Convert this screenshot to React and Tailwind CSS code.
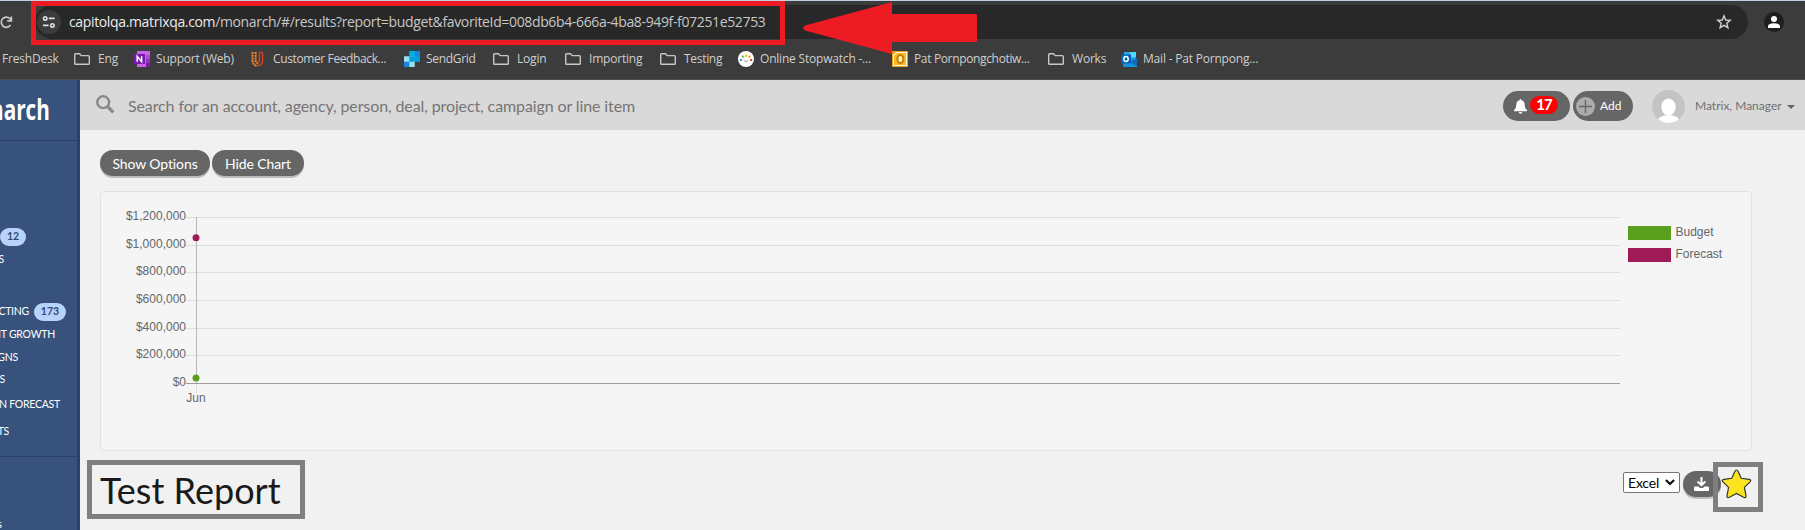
import React from 'react';

const Folder = () => (
  <svg width="16" height="12" viewBox="0 0 16 12" fill="none" stroke="#c7c7c7" strokeWidth="1.4" strokeLinejoin="round">
    <path d="M.7 1.6Q.7.7 1.6.7H5.6L7.2 2.6H14.4Q15.3 2.6 15.3 3.5V10.4Q15.3 11.3 14.4 11.3H1.6Q.7 11.3.7 10.4Z" />
  </svg>
);

const OneNote = () => (
  <svg width="16" height="16" viewBox="0 0 16 16">
    <path d="M3 0H16V16H3Z" fill="#c764e8" />
    <path d="M12 4H16V8H12Z" fill="#ae4bd5" />
    <path d="M12 8H16V12H12Z" fill="#9332bf" />
    <path d="M12 12H16V16H12Z" fill="#7719aa" />
    <path d="M0 3H11V13H0Z" fill="#7719aa" />
    <path d="M3.2 10.7V5.3L7.6 10.7V5.3" fill="none" stroke="#fff" strokeWidth="1.5" />
  </svg>
);

const Ujet = () => (
  <svg width="16" height="16" viewBox="0 0 16 16" fill="none">
    <path d="M1.5 1V9Q1.5 14.2 6 14.8M4.6 1V9Q4.6 12 7 12.2" stroke="#f0862a" strokeWidth="2" strokeDasharray="2 .7" />
    <path d="M6 14.8Q11.6 14.6 11.6 9V3Q11.6 1 9.6 1.2Q8.4 1.4 8.4 3V9Q8.4 11.4 7 12.2" stroke="#d3451f" strokeWidth="1.5" />
  </svg>
);

const SendGrid = () => (
  <svg width="16" height="16" viewBox="0 0 16 16">
    <path d="M5.3 0H16V10.7H5.3Z" fill="#00b2e3" />
    <path d="M0 5.3H10.7V16H0Z" fill="#99e1f4" />
    <path d="M0 10.7H5.3V16H0Z" fill="#1a82e2" />
    <path d="M10.7 5.3H16V10.7H10.7Z" fill="#009dd9" />
    <path d="M5.3 5.3H10.7V10.7H5.3Z" fill="#009dd9" />
    <path d="M10.7 0H16V5.3H10.7Z" fill="#1a82e2" />
  </svg>
);

const Stopwatch = () => (
  <svg width="16" height="16" viewBox="0 0 16 16">
    <circle cx="8" cy="8" r="8" fill="#fff" />
    <rect x="7" y="3.5" width="2" height="2.4" fill="#f5c400" />
    <rect x="3.8" y="4.6" width="2" height="2" fill="#5bb531" />
    <rect x="10.4" y="4.6" width="2" height="2" fill="#f08a1d" />
    <rect x="2" y="8" width="2" height="2" fill="#28a0dc" />
    <rect x="12.2" y="8" width="2" height="2" fill="#e3342b" />
    <path d="M5.6 9L8 11L10.4 9" fill="none" stroke="#999" />
  </svg>
);

const OldOutlook = () => (
  <svg width="16" height="16" viewBox="0 0 16 16">
    <rect width="16" height="16" fill="#e9a01c" />
    <path d="M1 14.5V4L4 1H15V15H1Z" fill="#fff3cf" />
    <path d="M2 14V4.4L4.4 2H14V14Z" fill="#f6bd29" />
    <ellipse cx="8.4" cy="8" rx="3" ry="4.1" fill="#fff0b8" stroke="#c97808" strokeWidth="2" />
  </svg>
);

const Outlook = () => (
  <svg width="16" height="16" viewBox="0 0 16 16">
    <path d="M3 1H15V9H3Z" fill="#28a8ea" />
    <path d="M9 1H15V6H9Z" fill="#50d9ff" />
    <path d="M2 8H16V16H2Z" fill="#1490df" />
    <path d="M9 11L16 7V15Z" fill="#0f6cbd" />
    <path d="M0 3.5H10V12.5H0Z" fill="#0364b8" />
    <ellipse cx="5" cy="8" rx="2.2" ry="2.4" fill="none" stroke="#fff" strokeWidth="1.5" />
  </svg>
);

const bookmarks = [
  { name: 'FreshDesk', width: 'w-[72px]' },
  { name: 'Eng', icon: Folder, width: 'w-[60px]' },
  { name: 'Support (Web)', icon: OneNote, width: 'w-[117px]' },
  { name: 'Customer Feedback...', icon: Ujet, width: 'w-[153px] tracking-[-0.38px]' },
  { name: 'SendGrid', icon: SendGrid, width: 'w-[89px] tracking-[-0.3px]' },
  { name: 'Login', icon: Folder, width: 'w-[72px]' },
  { name: 'Importing', icon: Folder, width: 'w-[95px]' },
  { name: 'Testing', icon: Folder, width: 'w-[78px] tracking-[-0.3px]' },
  { name: 'Online Stopwatch -...', icon: Stopwatch, width: 'w-[154px]' },
  { name: 'Pat Pornpongchotiw...', icon: OldOutlook, width: 'w-[156px] tracking-[-0.35px]' },
  { name: 'Works', icon: Folder, width: 'w-[73px]' },
  { name: 'Mail - Pat Pornpong...', icon: Outlook, width: 'w-[140px]' }
];

function BrowserBar() {
  return (
    <div className="relative h-20 bg-[#3c3c3c] border-t border-t-[#c3d0e2] border-b border-b-[#4b4b4b] font-['Open_Sans','Noto_Sans',sans-serif]">
      <div className="flex items-center h-[38px] pt-1">
        <svg className="w-[13px] h-[13px] shrink-0" viewBox="0 0 13 13" fill="none" stroke="#c7c7c7" strokeWidth="1.7">
          <path d="M10.6 9A5.1 5.1 0 1 1 10 2.6L11 4M11.4.6V4.9H7.2" />
        </svg>
        <div className="ml-[22px] w-[1713px] h-[34px] rounded-full bg-[#282828] flex items-center pl-0.5 pr-4">
          <div className="w-6 h-6 rounded-full bg-[#3c3c3c] flex items-center justify-center">
            <svg width="14" height="14" viewBox="0 0 14 14" fill="none" stroke="#dedede" strokeWidth="1.6">
              <circle cx="3.2" cy="3.4" r="1.7" />
              <path d="M6.8 3.4H12.6M1 10.4H6.6" />
              <circle cx="10.4" cy="10.4" r="1.7" />
            </svg>
          </div>
          <div className="ml-2 flex-1 text-[14px] leading-5 whitespace-nowrap tracking-[-0.355px] text-[#c7c7c7]">
            <span className="text-[#ededed]">capitolqa.matrixqa.com</span>
            /monarch/#/results?report=budget&amp;favoriteId=008db6b4-666a-4ba8-949f-f07251e52753
          </div>
          <svg width="16" height="16" viewBox="0 0 16 16" fill="none" stroke="#d0d0d0" strokeWidth="1.4">
            <path d="M8 1.8L9.7 6L14.2 6.3L10.8 9.2L11.9 13.7L8 11.3L4.1 13.7L5.2 9.2L1.8 6.3L6.3 6Z" />
          </svg>
        </div>
        <div className="ml-4 w-5 h-5 rounded-full bg-[#1f1f1f] flex items-center justify-center">
          <svg width="12" height="12" viewBox="0 0 12 12" fill="#fff">
            <circle cx="6" cy="3" r="3" />
            <path d="M0 12V10Q.5 7.2 6 7.2T12 10V12Z" />
          </svg>
        </div>
      </div>

      <div className="flex items-center h-10 pl-0.5 tracking-[-0.2px]">
        {bookmarks.map(({ name, icon: Icon, width }) => (
          <div key={name} className={`flex items-center shrink-0 whitespace-nowrap text-[12px] text-[#cfcfcf] ${width} ${Icon === Folder ? 'gap-2' : 'gap-1.5'}`}>
            {Icon && <Icon />}
            {name}
          </div>
        ))}
      </div>

      {/* Callout around the url */}
      <div className="absolute left-[31px] top-0 w-[754px] h-11 border-[5px] border-[#ed1c24]" />
      <svg className="absolute left-[803px] top-px" width="174" height="52" viewBox="0 0 174 52" fill="#ed1c24">
        <path d="M0 25.5L2 23.5L89 0V12H173L174 13V39L173 40H89V52L2 28.5Z" />
      </svg>
    </div>
  );
}

const Count = ({ children, className }) => (
  <span className={`h-[18px] rounded-full bg-[#b9d2fa] text-[#2f4a75] text-[10.5px] font-bold flex items-center justify-center shrink-0 ${className}`}>
    {children}
  </span>
);

const navItems = [
  { name: 'S', height: 'h-[28px]', end: 'w-1' },
  { name: 'CTING', height: 'h-[49px] pt-[27px]', end: 'w-[29px]', count: 173 },
  { name: 'NT GROWTH', height: 'h-[24px]', end: 'w-[55px]' },
  { name: 'GNS', height: 'h-[21px]', end: 'w-[18px]' },
  { name: 'S', height: 'h-[24px]', end: 'w-[5px]' },
  { name: 'N FORECAST', height: 'h-[26px]', end: 'w-[60px]' },
  { name: 'TS', height: 'h-[28px]', end: 'w-[9px]' }
];

function Sidebar() {
  return (
    <aside className="w-20 shrink-0 bg-[#36527d] border-r-[3px] border-[#2a4266] overflow-hidden text-white">
      <div className="h-[61px] border-b border-[#2a4266] flex items-center pb-0.5">
        <div className="w-[50px] flex justify-end shrink-0">
          <span className="font-['Open_Sans',sans-serif] font-bold text-[28px] leading-8 origin-right scale-x-[0.74]">narch</span>
        </div>
      </div>
      <nav className="h-[316px] pt-[87px] border-b border-[#2a4266]">
        <Count className="w-[26px]">12</Count>
        {navItems.map((item, i) => (
          <div key={i} className={`flex items-center gap-[5px] text-[10.5px] tracking-[-0.25px] whitespace-nowrap ${item.height}`}>
            <span className={`flex justify-end shrink-0 ${item.end}`}>{item.name}</span>
            {item.count && <Count className="w-8 tracking-normal">{item.count}</Count>}
          </div>
        ))}
      </nav>
      <div className="mt-[59px] w-0.5 flex justify-end text-[11px]">s</div>
    </aside>
  );
}

function Header() {
  return (
    <header className="h-[50px] bg-[#d9d9d9] flex items-center pl-4 pr-2.5 shrink-0">
      <svg className="-mt-0.5" width="19" height="19" viewBox="0 0 19 19" fill="none" stroke="#8a8a8a">
        <circle cx="7.2" cy="7.2" r="5.9" strokeWidth="2.4" />
        <path d="M11.5 11.5L17.3 17.3" strokeWidth="3.2" />
      </svg>
      <div className="ml-[13px] mt-0.5 flex-1 text-[16px] tracking-[-0.11px] text-[#757575]">
        Search for an account, agency, person, deal, project, campaign or line item
      </div>
      <div className="w-[67px] h-[30px] mt-0.5 mr-[3px] rounded-full bg-[#666] flex items-center pl-[11px] gap-[3px]">
        <svg width="13" height="15" viewBox="0 0 13 15" fill="#fff">
          <path d="M6.5 0Q7.4 0 7.4 1.2Q10.7 2 10.7 6Q10.7 9.5 13 11.3V12.2H0V11.3Q2.3 9.5 2.3 6Q2.3 2 5.6 1.2Q5.6 0 6.5 0M4.8 13H8.2Q8 14.8 6.5 14.8T4.8 13" />
        </svg>
        <span className="w-7 h-[18px] -mt-0.5 rounded-full bg-[#f00] text-white text-[15px] leading-[17px] tracking-[-0.9px] font-bold text-center">17</span>
      </div>
      <div className="w-[60px] h-[30px] mt-0.5 rounded-full bg-[#666] text-white text-[12px] flex items-center pl-[3px] gap-[5px]">
        <svg width="19" height="19" viewBox="0 0 19 19">
          <circle cx="9.5" cy="9.5" r="9.5" fill="#acacac" />
          <path d="M9.5 3V16M3 9.5H16" stroke="#666" strokeWidth="1.4" />
        </svg>
        Add
      </div>
      <svg className="ml-[19px] mt-[3px]" width="33" height="33" viewBox="0 0 33 33">
        <clipPath id="avatar"><circle cx="16.5" cy="16.5" r="16.5" /></clipPath>
        <g clipPath="url(#avatar)">
          <rect width="33" height="33" fill="#c4c4c4" />
          <ellipse cx="16.5" cy="17" rx="7.2" ry="8.6" fill="#fff" />
          <ellipse cx="16.5" cy="31" rx="11" ry="6" fill="#fff" />
        </g>
      </svg>
      <div className="ml-2.5 mt-0.5 w-[92px] text-[12px] text-[#707070] whitespace-nowrap">Matrix, Manager</div>
      <svg className="mt-1" width="8" height="4" viewBox="0 0 8 4"><path d="M0 0H8L4 4Z" fill="#666" /></svg>
    </header>
  );
}

const ticks = [
  { label: '$1,200,000', y: 26 },
  { label: '$1,000,000', y: 54 },
  { label: '$800,000', y: 81 },
  { label: '$600,000', y: 109 },
  { label: '$400,000', y: 137 },
  { label: '$200,000', y: 164 },
  { label: '$0', y: 192 }
];

function Chart() {
  return (
    <div className="mt-[13px] w-[1652px] h-[260px] rounded border border-[#e2e2e2] bg-[#f5f5f5]">
      <svg width="1650" height="258" viewBox="1 1 1650 258" className="font-['Liberation_Sans',Arial,sans-serif] text-[12px]" fill="#666">
        {ticks.map((tick) => (
          <g key={tick.label}>
            <path d={`M86 ${tick.y + 0.5}H1520`} stroke={tick.y === 192 ? '#9e9e9e' : '#dddddd'} />
            <text x="86" y={tick.y + 3} textAnchor="end">{tick.label}</text>
          </g>
        ))}
        <path d="M96.5 26V192" stroke="#b9b9b9" />
        <path d="M96.5 193V202" stroke="#dddddd" />
        <circle cx="96" cy="46.7" r="3.5" fill="#9e1b55" />
        <circle cx="96" cy="187" r="3.5" fill="#5aa01c" />
        <text x="96" y="211" textAnchor="middle">Jun</text>
        <rect x="1528" y="35" width="43" height="14" fill="#5aa01c" />
        <text x="1575.5" y="45">Budget</text>
        <rect x="1528" y="57" width="43" height="14" fill="#9e1b55" />
        <text x="1575.5" y="67">Forecast</text>
      </svg>
    </div>
  );
}

export default function App() {
  return (
    <div className="w-[1805px] h-[530px] overflow-hidden flex flex-col bg-[#f1f1f1] font-[Lato,sans-serif]">
      <BrowserBar />
      <div className="flex flex-1 min-h-0">
        <Sidebar />
        <div className="flex-1 min-w-0">
          <Header />
          <main className="pl-5 pt-5">
            <div className="flex gap-0.5 text-white text-[14px] tracking-[-0.1px]">
              <button className="w-[110px] h-[26px] mb-0.5 rounded-full bg-[#666] shadow-[0_2px_0_#bcbcbc]">Show Options</button>
              <button className="w-[92px] h-[26px] rounded-full bg-[#666] shadow-[0_2px_0_#bcbcbc]">Hide Chart</button>
            </div>
            <Chart />
            <div className="-ml-[13px] mt-[9px] flex items-start">
              <h1 className="w-[218px] h-[59px] border-[5px] border-[#7f7f7f] pl-2 text-[36px] leading-[50px] text-[#1a1a1a] whitespace-nowrap">Test Report</h1>
              <div className="ml-[1318px] mt-3 w-[57px] h-[21px] rounded-[2px] border border-[#767676] bg-white flex items-center justify-between pl-1 pr-1 text-[14px] leading-[19px] tracking-[-0.2px] text-black">
                Excel
                <svg width="10" height="7" viewBox="0 0 10 7" fill="none" stroke="#111" strokeWidth="2.2"><path d="M.9 1L5 5L9.1 1" /></svg>
              </div>
              <div className="ml-[3px] mt-[11px] w-[38px] h-[26px] rounded-full bg-[#666] shadow-[0_2px_0_#bcbcbc] flex items-center justify-center">
                <svg className="-ml-0.5" width="15" height="14" viewBox="0 0 15 14" fill="none" stroke="#fff">
                  <path d="M7.5 0V7.6M3.6 4.6L7.5 8.2L11.4 4.6" strokeWidth="2" />
                  <path d="M0 10.5Q0 9.5 1 9.5H4.5L6 11H9L10.5 9.5H14Q15 9.5 15 10.5V13Q15 14 14 14H1Q0 14 0 13Z" fill="#fff" stroke="none" />
                </svg>
              </div>
              <div className="-ml-2 mt-0.5 w-[50px] h-[50px] border-[5px] border-[#7f7f7f] pl-[3px] pt-0.5">
                <svg width="31" height="30" viewBox="0 0 31 30">
                  <path d="M15.5 1Q16.5 1 17.2 2.6L20.2 9.3L28 10.3Q30.8 10.8 29 12.8L23.4 18.4L25 26.7Q25.2 29.5 22.6 28.3L15.5 24.5L8.4 28.3Q5.8 29.5 6 26.7L7.6 18.4L2 12.8Q.2 10.8 3 10.3L10.8 9.3L13.8 2.6Q14.5 1 15.5 1Z" fill="#fbe41f" stroke="#333" strokeWidth="1.2" />
                </svg>
              </div>
            </div>
          </main>
        </div>
      </div>
    </div>
  );
}
